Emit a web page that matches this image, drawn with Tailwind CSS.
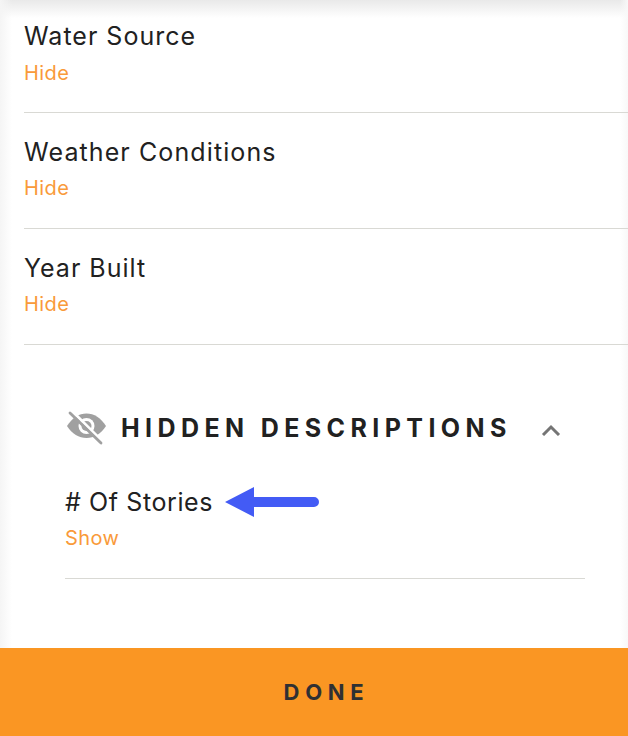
<!DOCTYPE html>
<html lang="en">
<head>
    <meta charset="UTF-8">
    <meta name="viewport" content="width=device-width, initial-scale=1.0">
    <title>Descriptions</title>
    <script src="https://cdn.jsdelivr.net/npm/@tailwindcss/browser@4"></script>
</head>
<body class="bg-white font-['Inter',sans-serif] text-[#212121]">
<div class="relative w-[628px] h-[736px] overflow-hidden flex flex-col">

    <!-- scroll shadow edges -->
    <div class="absolute top-0 left-0 w-full h-[18px] bg-gradient-to-b from-[#e9e9e9] to-white/0"></div>
    <div class="absolute top-0 left-0 w-[12px] h-[648px] bg-gradient-to-r from-[#f5f5f5] to-white/0"></div>
    <div class="absolute top-0 right-0 w-[8px] h-[648px] bg-gradient-to-l from-[#f8f8f8] to-white/0"></div>

    <div class="relative h-[648px] pl-6">
        <div class="h-[113px] pt-[20px] border-b border-[#d9d9d4]">
            <div class="text-[25px] leading-8 tracking-[1px]">Water Source</div>
            <div class="text-[20px] leading-6 mt-[9px] tracking-[0.4px] text-[#f99a3a]">Hide</div>
        </div>
        <div class="h-[116px] pt-[23px] border-b border-[#d9d9d4]">
            <div class="text-[25px] leading-8 tracking-[1.1px]">Weather Conditions</div>
            <div class="text-[20px] leading-6 mt-[8px] tracking-[0.4px] text-[#f99a3a]">Hide</div>
        </div>
        <div class="h-[116px] pt-[23px] border-b border-[#d9d9d4]">
            <div class="text-[25px] leading-8 tracking-[1px]">Year Built</div>
            <div class="text-[20px] leading-6 mt-[8px] tracking-[0.4px] text-[#f99a3a]">Hide</div>
        </div>

        <!-- Hidden section -->
        <div class="pl-[41px] pr-[43px]">
            <div class="flex items-center h-[40px] mt-[62px]">
                <svg class="w-[42px] h-[36px] shrink-0 -ml-[1px]" viewBox="0 0 42 36">
                    <path fill="#a0a0a0" d="M3 17C8 9 15 4.500 22.500 4.500S37 9 42 17C37 25 30 29 22.500 29S8 25 3 17Z"/>
                    <circle cx="22.500" cy="17" r="8" fill="#fff"/>
                    <circle cx="22.500" cy="17" r="5" fill="#a0a0a0"/>
                    <path d="M9 3l31 31" stroke="#fff" stroke-width="3"/>
                    <path d="M6 4l31 30" stroke="#a0a0a0" stroke-width="2.800" stroke-linecap="round"/>
                </svg>
                <span class="ml-[15px] pt-[3px] text-[25px] font-bold tracking-[5.4px] whitespace-nowrap">HIDDEN DESCRIPTIONS</span>
                <svg class="w-[20px] h-[12px] ml-auto mr-[24px] mt-[6px]" viewBox="0 0 20 12" fill="none">
                    <path d="M2 11l8-8 8 8" stroke="#757575" stroke-width="3"/>
                </svg>
            </div>
            <div class="relative mt-[39px] text-[25px] leading-8 tracking-[0.6px]">
                # Of Stories
                <svg class="absolute left-[160px] top-[1px] w-[94px] h-[30px]" viewBox="0 0 94 30">
                    <path fill="#435bf5" d="M0 15 29 0v10h60a5 5 0 0 1 0 10H29v10Z"/>
                </svg>
            </div>
            <div class="text-[20px] leading-6 mt-[8px] tracking-[0.4px] text-[#f99a3a]">Show</div>
            <div class="border-b border-[#d9d9d4] mt-[28px]"></div>
        </div>
    </div>

    <button class="h-[88px] w-full shrink-0 pl-[25px] bg-[#fa9623] text-[#2f3033] text-[22px] font-bold tracking-[5.7px]">DONE</button>
</div>
</body>
</html>
